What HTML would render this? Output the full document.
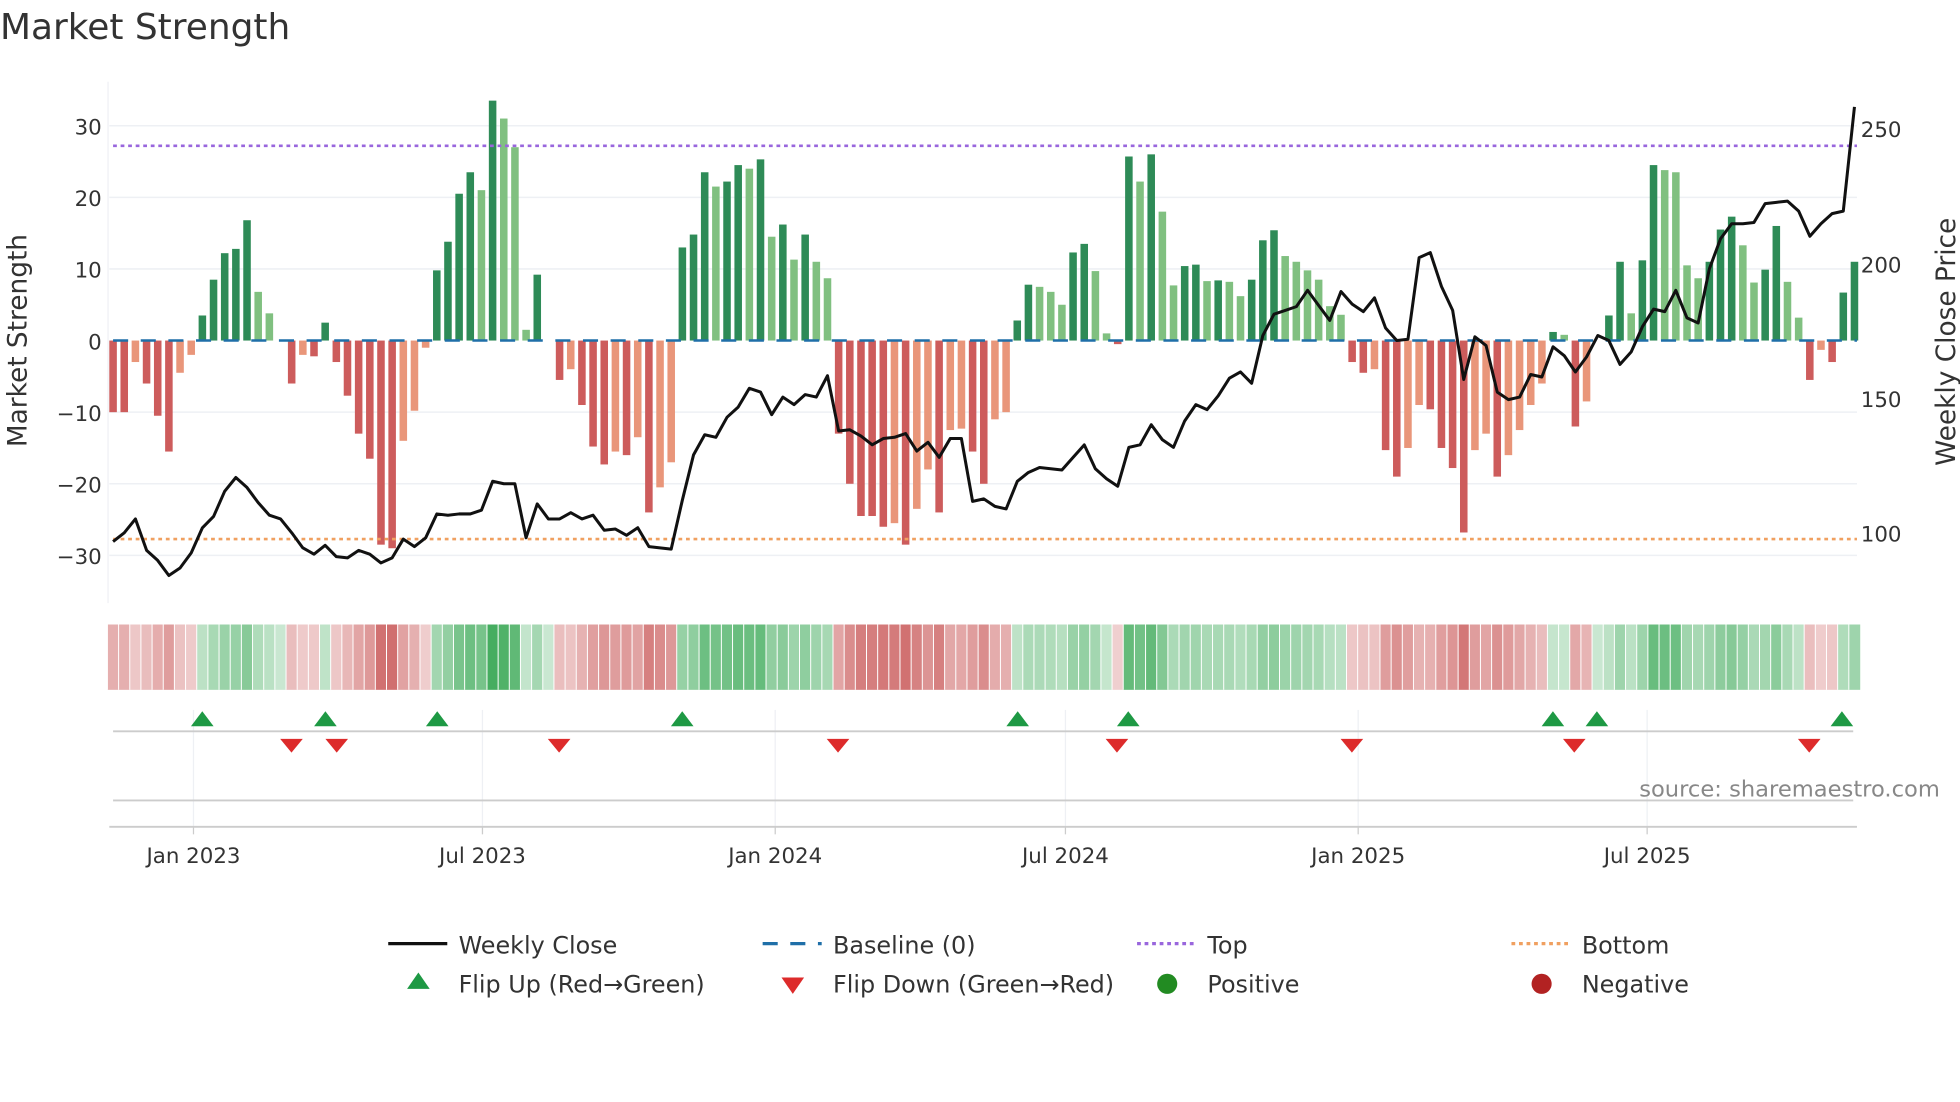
<!DOCTYPE html>
<html><head><meta charset="utf-8"><style>
html,body{margin:0;padding:0;background:#fff;width:1960px;height:1102px;overflow:hidden}
svg{display:block}
text{font-family:"DejaVu Sans","Liberation Sans",sans-serif;fill:#333}
</style></head><body>
<svg id="s" width="1960" height="1102" viewBox="0 0 1560 877" xmlns="http://www.w3.org/2000/svg">
<text x="0" y="31" font-size="28" textLength="231" lengthAdjust="spacingAndGlyphs">Market Strength</text>
<g id="grid" stroke="#eef0f4" stroke-width="1.2">
<line x1="87" x2="1478" y1="100" y2="100"/><line x1="87" x2="1478" y1="157" y2="157"/>
<line x1="87" x2="1478" y1="214" y2="214"/><line x1="87" x2="1478" y1="328" y2="328"/>
<line x1="87" x2="1478" y1="385" y2="385"/><line x1="87" x2="1478" y1="442" y2="442"/>
</g>
<line x1="86" y1="65" x2="86" y2="480" stroke="#eef0f4"/>
<g id="bars"></g>
<g id="heat"></g>
<line x1="90" x2="1478" y1="116" y2="116" stroke="#9966dd" stroke-width="2" stroke-dasharray="3,3"/>
<line x1="90" x2="1478" y1="429" y2="429" stroke="#f0a060" stroke-width="2" stroke-dasharray="3,3"/>
<polyline id="price" fill="none" stroke="#111" stroke-width="2.4" stroke-linejoin="round"/>
<g font-size="17" text-anchor="end">
<text x="81" y="107">30</text><text x="81" y="164">20</text><text x="81" y="221">10</text>
<text x="81" y="278">0</text><text x="81" y="335">−10</text><text x="81" y="392">−20</text><text x="81" y="449">−30</text>
</g>
<g font-size="17">
<text x="1481" y="109">250</text><text x="1481" y="217">200</text><text x="1481" y="324">150</text><text x="1481" y="431">100</text>
</g>
<text transform="translate(21,271) rotate(-90)" font-size="21" text-anchor="middle">Market Strength</text>
<text transform="translate(1556,272) rotate(-90)" font-size="21" text-anchor="middle">Weekly Close Price</text>
<g stroke="#eef0f4"><line x1="154" x2="154" y1="565" y2="658"/><line x1="384" x2="384" y1="565" y2="658"/><line x1="617" x2="617" y1="565" y2="658"/><line x1="848" x2="848" y1="565" y2="658"/><line x1="1081" x2="1081" y1="565" y2="658"/><line x1="1311" x2="1311" y1="565" y2="658"/></g>
<line x1="90" x2="1475" y1="582" y2="582" stroke="#ccc" stroke-width="1.5"/>
<line x1="90" x2="1475" y1="637" y2="637" stroke="#ccc" stroke-width="1.5"/>
<line x1="87" x2="1478" y1="658" y2="658" stroke="#ccc" stroke-width="1.5"/>
<g id="mk"></g>
<text x="1544" y="634" font-size="18" text-anchor="end" style="fill:#888">source: sharemaestro.com</text>
<g font-size="17" text-anchor="middle">
<text x="154" y="687">Jan 2023</text><text x="384" y="687">Jul 2023</text><text x="617" y="687">Jan 2024</text>
<text x="848" y="687">Jul 2024</text><text x="1081" y="687">Jan 2025</text><text x="1311" y="687">Jul 2025</text>
</g>
<g stroke="#ccc"><line x1="154" x2="154" y1="658" y2="664"/><line x1="384" x2="384" y1="658" y2="664"/><line x1="617" x2="617" y1="658" y2="664"/><line x1="848" x2="848" y1="658" y2="664"/><line x1="1081" x2="1081" y1="658" y2="664"/><line x1="1311" x2="1311" y1="658" y2="664"/></g>
<g font-size="19">
<line x1="309" x2="356" y1="751" y2="751" stroke="#111" stroke-width="2.5"/><text x="365" y="759">Weekly Close</text>
<line x1="607" x2="654" y1="751" y2="751" stroke="#1f6fa8" stroke-width="2.5" stroke-dasharray="12,10"/><text x="663" y="759">Baseline (0)</text>
<line x1="905" x2="952" y1="751" y2="751" stroke="#9966dd" stroke-width="2.5" stroke-dasharray="3,3"/><text x="961" y="759">Top</text>
<line x1="1203" x2="1250" y1="751" y2="751" stroke="#f0a060" stroke-width="2.5" stroke-dasharray="3,3"/><text x="1259" y="759">Bottom</text>
<path d="M333 774 L342 787 L324 787Z" fill="#1e9944"/><text x="365" y="790">Flip Up (Red→Green)</text>
<path d="M622 778 L640 778 L631 791Z" fill="#dd2b2b"/><text x="663" y="790">Flip Down (Green→Red)</text>
<circle cx="929" cy="783" r="8" fill="#228b22"/><text x="961" y="790">Positive</text>
<circle cx="1227" cy="783" r="8" fill="#b22222"/><text x="1259" y="790">Negative</text>
</g>
</svg>
<script>
var V=[-10,-10,-3,-6,-10.5,-15.5,-4.5,-2,3.5,8.5,12.2,12.8,16.8,6.8,3.8,0,-6,-2,-2.2,2.5,-3,-7.7,-13,-16.5,-28.5,-29,-14,-9.8,-1,9.8,13.8,20.5,23.5,21,33.5,31,27,1.5,9.2,0,-5.5,-4,-9,-14.8,-17.3,-15.5,-16,-13.5,-24,-20.5,-17,13,14.8,23.5,21.5,22.2,24.5,24,25.3,14.5,16.2,11.3,14.8,11,8.7,-13,-20,-24.5,-24.5,-26,-25.5,-28.5,-23.5,-18,-24,-12.5,-12.3,-15.5,-20,-11,-10,2.8,7.8,7.5,6.8,5,12.3,13.5,9.7,1,-0.5,25.7,22.2,26,18,7.7,10.4,10.6,8.3,8.4,8.2,6.2,8.5,14,15.4,11.8,11,9.8,8.5,4.8,3.6,-3,-4.5,-4,-15.3,-19,-15,-9,-9.6,-15,-17.8,-26.8,-15.3,-13,-19,-16,-12.5,-9,-6,1.2,0.8,-12,-8.5,0,3.5,11,3.8,11.2,24.5,23.8,23.5,10.5,8.7,11,15.5,17.3,13.3,8.1,9.9,16,8.2,3.2,-5.5,-1.3,-3,6.7,11];
var P=[431,424,413,438,446,458,452,440,420,411,391,380,388,400,410,413,424,436,441,434,443,444,438,441,448,444,429,435,428,409,410,409,409,406,383,385,385,428,401,413,413,408,413,410,422,421,426,420,435,436,437,398,362,346,348,332,324,309,312,330,316,322,314,316,299,343,342,347,354,349,348,345,359,352,364,349,349,399,397,403,405,383,376,372,373,374,364,354,373,381,387,356,354,338,350,356,335,322,326,315,301,296,305,267,250,247,244,231,243,255,232,242,248,237,261,271,270,205,201,228,247,302,268,275,312,318,316,298,300,276,283,296,284,267,271,290,280,260,246,248,231,253,257,214,190,178,178,177,162,161,160,168,188,178,170,168,85];
var n=V.length,step=(1476-90)/(n-1),ns="http://www.w3.org/2000/svg";
function el(g,t,a){var e=document.createElementNS(ns,t);for(var k in a)e.setAttribute(k,a[k]);document.getElementById(g).appendChild(e);}
function mix(c,t){return "rgb("+c.map(function(x){return Math.round(255-(255-x)*t)}).join(",")+")";}
for(var i=0;i<n;i++){var x=90+i*step,v=V[i],p=i?V[i-1]:0;
 var dark=Math.abs(v)>=Math.abs(p)||(v*p<0);
 var col=v>=0?(dark?"#2e8b57":"#80c080"):(dark?"#cd5c5c":"#e9967a");
 if(v!==0)el("bars","rect",{x:x-3,y:v>0?271-5.7*v:271,width:6,height:Math.abs(v)*5.7,fill:col});
 var t=Math.min(1,0.25+Math.abs(v)/55);
 el("heat","rect",{x:x-4.5,y:497,width:step+0.2,height:52,fill:v>=0?mix([40,160,70],t):mix([195,70,70],t)});
 el("heat","line",{x1:x-4.5,x2:x-4.5,y1:497,y2:549,stroke:"#fff","stroke-width":0.8});
}
el("bars","line",{x1:90,x2:1478,y1:271,y2:271,stroke:"#1f6fa8","stroke-width":2,"stroke-dasharray":"12,10"});
var pts=[];for(var i=0;i<n;i++)pts.push((90+i*step).toFixed(1)+","+P[i]);
document.getElementById("price").setAttribute("points",pts.join(" "));
[161,259,348,543,810,898,1236,1271,1466].forEach(function(x){el("mk","path",{d:"M"+x+" 566 L"+(x+9)+" 578 L"+(x-9)+" 578Z",fill:"#1e9944"});});
[232,268,445,667,889,1076,1253,1440].forEach(function(x){el("mk","path",{d:"M"+(x-9)+" 588 L"+(x+9)+" 588 L"+x+" 599Z",fill:"#dd2b2b"});});
</script>
</body></html>
